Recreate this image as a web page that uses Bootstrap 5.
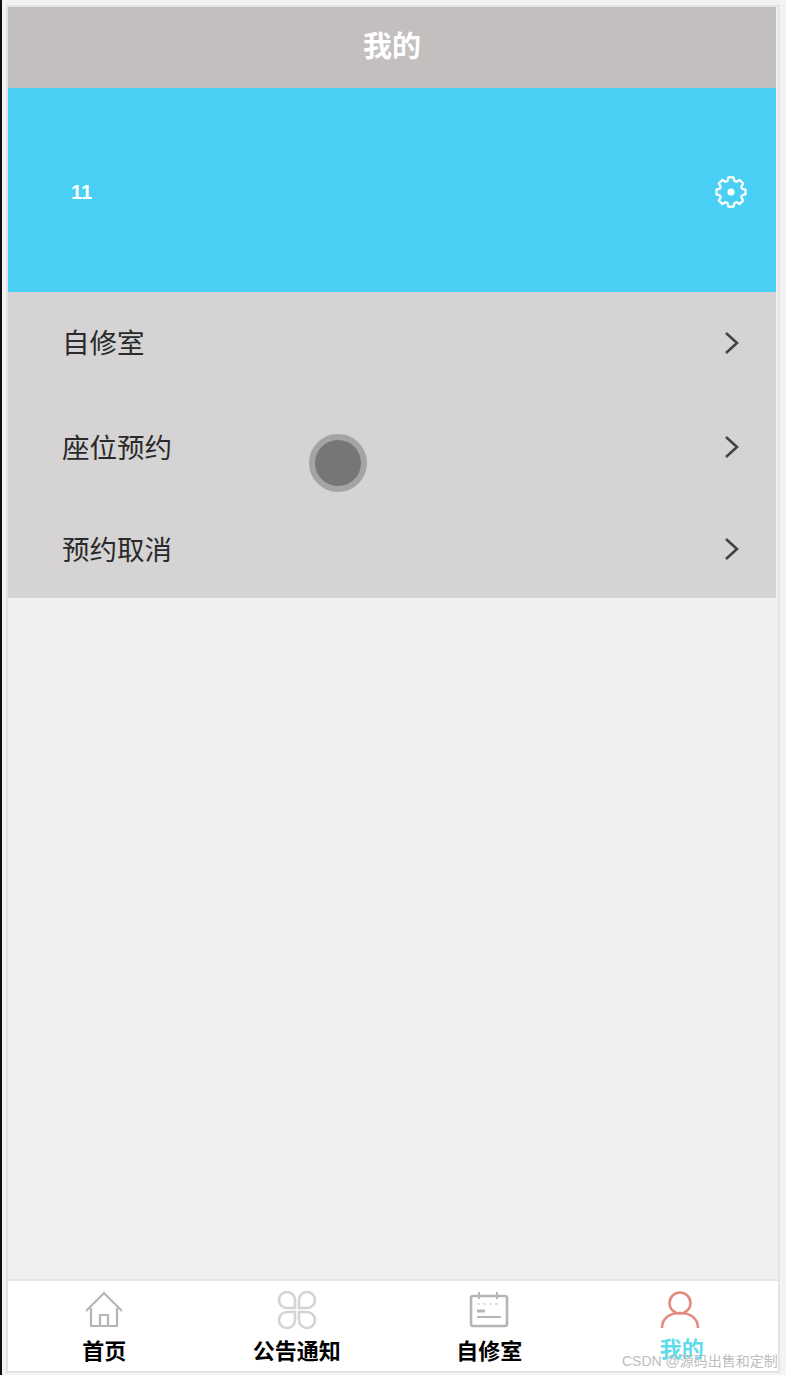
<!doctype html>
<html lang="zh">
<head>
<meta charset="utf-8">
<title>我的</title>
<link href="https://cdn.jsdelivr.net/npm/bootstrap@5.3.0/dist/css/bootstrap.min.css" rel="stylesheet">
<style>
html,body{height:100%;}
body{background:#f3f3f3;font-family:"Liberation Sans","Noto Sans CJK SC",sans-serif;position:relative;overflow:hidden;}
.edge-line{position:absolute;left:0;top:0;bottom:0;width:2px;background:#111;}
.screen{position:absolute;left:8px;right:8px;top:7px;bottom:4px;background:#f0f0f1;box-shadow:0 0 0 2px #e4e4e4;}
.title-bar{height:81px;margin-right:2px;background:#c4bfbf;color:#fff;font-size:29px;font-weight:700;}
.hero{height:204px;margin-right:2px;background:#48cff3;color:#fff;padding:0 29px 0 63px;}
.hero-name{font-size:20px;font-weight:700;padding-top:3px;}
.hero-gear{margin-top:4px;}
.menu-row{margin-right:2px;background:#d5d3d3;color:#2a2a2a;font-size:27.5px;height:102px;padding:0 36px 0 54px;}
.menu-row.lower{padding-top:4px;}
.menu-row.first{border-bottom:1px solid #d9d7d7;}
.menu-text{padding-top:3px;}
.tabs{height:92px;background:#fff;border-top:2px solid #e6e6e6;}
.tab-item{width:25%;padding-top:10px;color:#000;font-size:22px;font-weight:700;line-height:26px;}
.tab-item svg{display:block;margin-bottom:1px;}
.tab-label{margin-top:9px;}
.tab-item.active{color:#5fdcec;}
.tab-item.active svg{margin-right:4px;}
.tab-item.active .tab-label{margin-top:7px;}
.touch-dot{position:absolute;left:309px;top:434px;width:58px;height:58px;border-radius:50%;background:#777577;border:6px solid #a5a4a5;}
.mark-text{position:absolute;left:622px;top:1352px;font-size:14px;line-height:18px;color:#bdbdbd;white-space:nowrap;}
</style>
</head>
<body>
<div class="edge-line"></div>
<div class="screen d-flex flex-column">
  <div class="title-bar d-flex align-items-center justify-content-center">我的</div>
  <div class="hero d-flex align-items-center justify-content-between">
    <span class="hero-name">11</span>
    <svg class="hero-gear" width="32" height="32" viewBox="0 0 32 32" fill="none" stroke="#fff" stroke-width="2.6" stroke-linejoin="round"><path d="M13 2.5h6l1 4.2 2.6 1.1 3.7-2.2 4 4.2-2.2 3.6 1 2.6 4 1v5.600l-4 1-1 2.600 2.200 3.600-4 4.200-3.700-2.200-2.600 1.100-1 4.200h-6l-1-4.200-2.600-1.100-3.700 2.200-4-4.200 2.200-3.600-1-2.600-4-1v-5.600l4-1 1-2.600-2.200-3.600 4-4.200 3.700 2.200 2.600-1.100z" transform="translate(2.400 -.83) scale(.85)"/><circle cx="16" cy="16" r="3.600" fill="#fff" stroke="none"/></svg>
  </div>
  <div class="menu-row first d-flex align-items-center justify-content-between"><span class="menu-text">自修室</span><svg width="16" height="24" viewBox="0 0 16 24" fill="none" stroke="#3f4447" stroke-width="2.600"><path d="M2 2l11 10L2 22"/></svg></div>
  <div class="menu-row lower d-flex align-items-center justify-content-between"><span class="menu-text">座位预约</span><svg width="16" height="24" viewBox="0 0 16 24" fill="none" stroke="#3f4447" stroke-width="2.600"><path d="M2 2l11 10L2 22"/></svg></div>
  <div class="menu-row lower d-flex align-items-center justify-content-between"><span class="menu-text">预约取消</span><svg width="16" height="24" viewBox="0 0 16 24" fill="none" stroke="#3f4447" stroke-width="2.600"><path d="M2 2l11 10L2 22"/></svg></div>
  <div class="flex-grow-1"></div>
  <div class="tabs d-flex">
    <div class="tab-item d-flex flex-column align-items-center">
      <svg width="40" height="38" viewBox="0 0 40 38" fill="none" stroke="#b5b5b5" stroke-width="2.200"><path d="M2 20L20 2l18 18"/><path d="M7 17v18h26V17"/><path d="M16 35V24h8v11"/></svg>
      <span class="tab-label">首页</span>
    </div>
    <div class="tab-item d-flex flex-column align-items-center">
      <svg width="40" height="38" viewBox="0 0 40 38" fill="none" stroke="#d4d4d4" stroke-width="2.600"><path d="M18 17h-8a8 8 0 1 1 8-8z"/><path d="M22 17h8a8 8 0 1 0-8-8z"/><path d="M18 21h-8a8 8 0 1 0 8 8z"/><path d="M22 21h8a8 8 0 1 1-8 8z"/></svg>
      <span class="tab-label">公告通知</span>
    </div>
    <div class="tab-item d-flex flex-column align-items-center">
      <svg width="40" height="38" viewBox="0 0 40 38" fill="none" stroke="#b5b5b5" stroke-width="2.600"><rect x="2" y="5" width="36" height="30" rx="2"/><path d="M10 1v7M28 1v7" stroke-width="2"/><path d="M8 26h24" stroke-width="2"/><path d="M8 20h8" stroke-width="3"/><path d="M8 13h24" stroke="#d9d9d9" stroke-width="1.500" stroke-dasharray="3 3"/></svg>
      <span class="tab-label">自修室</span>
    </div>
    <div class="tab-item active d-flex flex-column align-items-center">
      <svg width="40" height="38" viewBox="0 0 40 38" fill="none" stroke="#e58a80" stroke-width="2.600"><circle cx="20" cy="12" r="10.500"/><path d="M2 37c0-10 8-15 18-15s18 5 18 15"/></svg>
      <span class="tab-label">我的</span>
    </div>
  </div>
</div>
<div class="touch-dot"></div>
<div class="mark-text">CSDN @源码出售和定制</div>
</body>
</html>
